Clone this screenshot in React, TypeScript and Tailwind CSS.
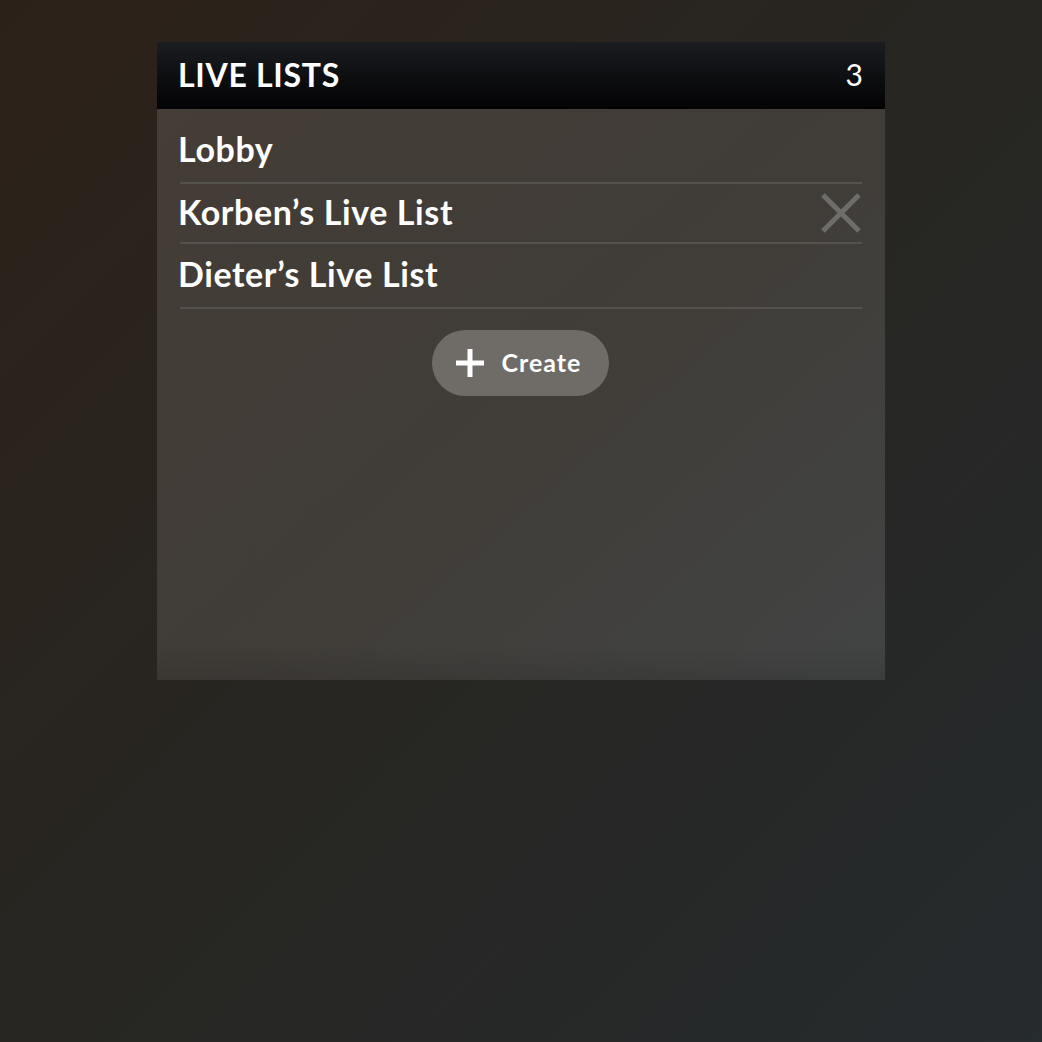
import React from 'react';

const lists = [
  { name: 'Lobby', removable: false },
  { name: 'Korben’s Live List', removable: true },
  { name: 'Dieter’s Live List', removable: false },
];

const CloseIcon = () => (
  <svg width="42" height="42" viewBox="0 0 42 42" className="text-[#6e6d6a]">
    <path d="M3 3 L39 39 M39 3 L3 39" stroke="currentColor" strokeWidth="5" fill="none" />
  </svg>
);

const PlusIcon = () => (
  <svg width="30" height="30" viewBox="0 0 30 30" className="text-white">
    <path d="M15 1 V29 M1 15 H29" stroke="currentColor" strokeWidth="5" fill="none" />
  </svg>
);

const App = () => {
  return (
    <div
      className="min-h-screen w-full bg-gradient-to-br from-[#2c2118] via-[#272622] to-[#262b2e] pt-[42px]"
      style={{ fontFamily: 'Lato, "Noto Sans", sans-serif' }}
    >
      <div className="ml-[157px] w-[728px] h-[638px] flex flex-col bg-gradient-to-br from-[#453d36] via-[#403c37] to-[#424444]">
        {/* Header */}
        <div className="h-[67px] flex items-center justify-between pl-[21px] pr-[22px] bg-gradient-to-b from-[#1b1d21] to-[#040405]">
          <h1 className="text-[32px] font-bold text-white tracking-[0.7px] -mt-[2px]">LIVE LISTS</h1>
          <span className="text-[30px] text-white -mt-[2px]">3</span>
        </div>

        {/* Lists */}
        <div className="flex-1 flex flex-col pl-[21px] pr-[23px] relative">
          {lists.map((l, i) => (
            <div
              key={l.name}
              className={`flex items-center justify-between border-b-2 border-[#55524d] ml-[2px] ${i === 0 ? 'h-[75px] pt-[6px]' : i === 1 ? 'h-[60px]' : 'h-[65px] pb-[4px]'}`}
            >
              <span className={`text-[34px] font-bold text-white -ml-[2px] tracking-[0.6px] ${i === 1 ? '-mt-[3px]' : ''}`}>{l.name}</span>
              {l.removable && <CloseIcon />}
            </div>
          ))}

          <div className="flex justify-center pt-[21px]">
            <button className="h-[66px] w-[177px] rounded-full bg-[#6f6c68] flex items-center pl-[23px] gap-[17px]">
              <PlusIcon />
              <span className="text-[25px] font-bold text-white tracking-[1px]">Create</span>
            </button>
          </div>

          <div className="absolute left-0 right-0 bottom-0 h-[36px] bg-gradient-to-b from-transparent to-black/10" />
        </div>
      </div>
    </div>
  );
};

export default App;
